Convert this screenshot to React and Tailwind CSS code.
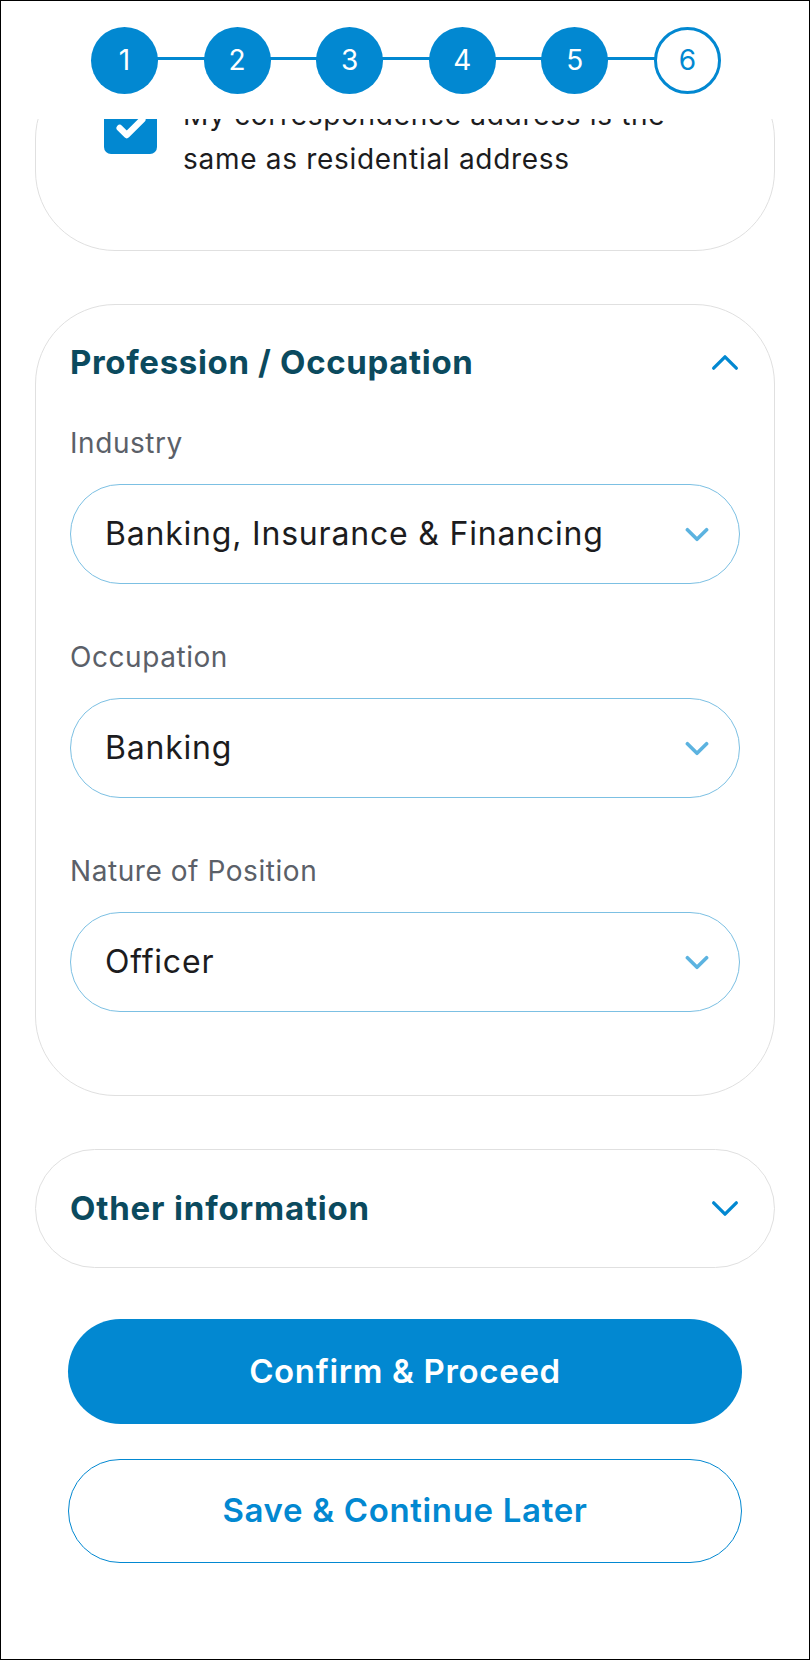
import { Check } from 'lucide-react';

const steps = [1, 2, 3, 4, 5, 6];

function Chevron({ up = false, className = '', stroke = 3 }) {
    return (
        <svg viewBox="0 0 30 18" className={className} fill="none" stroke="currentColor" strokeWidth={stroke} strokeLinecap="round" strokeLinejoin="round">
            {up ? <path d="M3 15 L15 3 L27 15" /> : <path d="M3 3 L15 15 L27 3" />}
        </svg>
    );
}

function SelectField({ label, value }) {
    return (
        <div>
            <div className="text-[28px] leading-[30px] tracking-[0.02em] text-[#5b6068] mb-[26px]">{label}</div>
            <div className="h-[100px] rounded-full border-[1.5px] border-[#7cc0e3] flex items-center justify-between pl-[34px] pr-[30px]">
                <span className="text-[32px] tracking-[0.025em] text-[#1c1c1e]">{value}</span>
                <Chevron className="w-[24px] h-[15px] text-[#5cb3e0]" stroke={4.5} />
            </div>
        </div>
    );
}

function App() {
    return (
        <div className="w-[810px] h-[1660px] bg-white border border-black overflow-hidden" style={{ fontFamily: 'Inter, "Noto Sans", sans-serif' }}>
            {/* Stepper */}
            <div className="h-[118px] relative flex items-center justify-between pl-[90px] pr-[88px]">
                <div className="absolute left-[124px] right-[124px] top-[56px] h-[3px] bg-[#0288d1]"></div>
                {steps.map((s) => (
                    <div
                        key={s}
                        className={`relative z-10 w-[67px] h-[67px] rounded-full flex items-center justify-center text-[28px] ${
                            s === 6 ? 'bg-white border-[3.5px] border-[#0288d1] text-[#0288d1]' : 'bg-[#0288d1] text-white'
                        }`}
                    >
                        {s}
                    </div>
                ))}
            </div>

            <div className="px-[34px]">
                {/* Address card, scrolled under the stepper */}
                <div className="overflow-hidden">
                    <div className="-mt-[60px] pt-[33px] pb-[69px] pl-[68px] pr-[30px] border border-[#e0e0e0] rounded-[80px] flex items-start gap-[26px]">
                        <div className="w-[53px] h-[52px] mt-[9px] rounded-[7px] bg-[#0288d1] flex items-center justify-center shrink-0">
                            <Check className="w-[34px] h-[34px] text-white" strokeWidth={4.5} />
                        </div>
                        <div className="text-[28px] leading-[44px] tracking-[0.025em] text-[#1c1c1e]">
                            My correspondence address is the<br />same as residential address
                        </div>
                    </div>
                </div>

                {/* Profession card */}
                <div className="mt-[53px] border border-[#e0e0e0] rounded-[80px] pt-[37px] pb-[83px] px-[34px]">
                    <div className="flex items-center justify-between mb-[46px]">
                        <span className="text-[33px] leading-[40px] tracking-[0.02em] font-bold text-[#0b4a5e]">Profession / Occupation</span>
                        <Chevron up className="w-[30px] h-[17px] text-[#0288d1]" stroke={3.5} />
                    </div>
                    <div className="flex flex-col gap-[58px]">
                        <SelectField label="Industry" value="Banking, Insurance & Financing" />
                        <SelectField label="Occupation" value="Banking" />
                        <SelectField label="Nature of Position" value="Officer" />
                    </div>
                </div>

                {/* Other info */}
                <div className="mt-[53px] h-[119px] border border-[#e0e0e0] rounded-full flex items-center justify-between px-[34px]">
                    <span className="text-[33px] tracking-[0.025em] font-bold text-[#0b4a5e]">Other information</span>
                    <Chevron className="w-[30px] h-[17px] text-[#0288d1]" stroke={3.5} />
                </div>

                {/* Buttons */}
                <div className="px-[33px] mt-[51px] flex flex-col gap-[35px]">
                    <button className="h-[105px] rounded-full bg-[#0288d1] text-white text-[33px] tracking-[0.02em] font-semibold">
                        Confirm &amp; Proceed
                    </button>
                    <button className="h-[104px] rounded-full border-[1.5px] border-[#0288d1] text-[#0288d1] text-[33px] tracking-[0.02em] font-semibold bg-white">
                        Save &amp; Continue Later
                    </button>
                </div>
            </div>
        </div>
    );
}

export default App;
